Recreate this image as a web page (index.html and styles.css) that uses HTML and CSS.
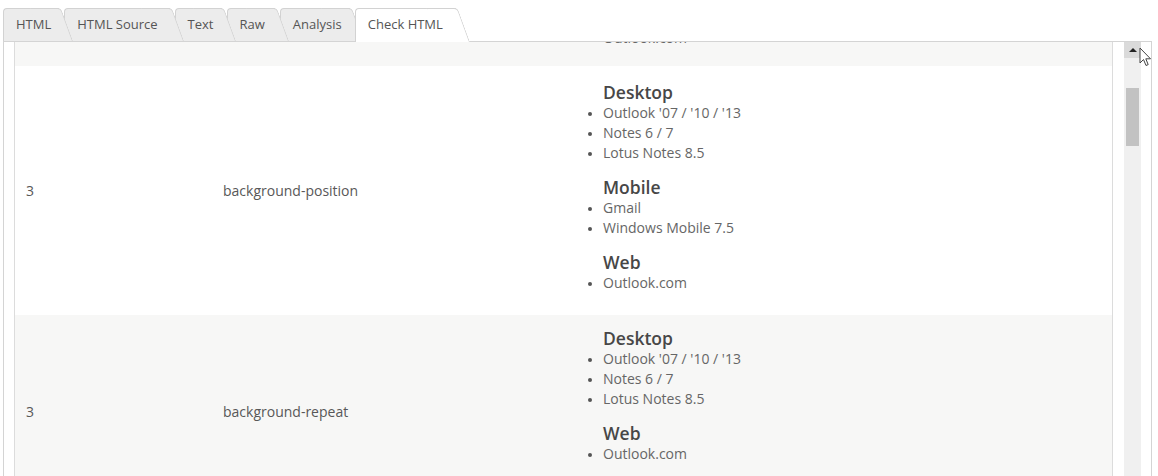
FILE: index.html
```html
<!DOCTYPE html>
<html lang="en">
<head>
    <meta charset="UTF-8">
    <meta name="viewport" content="width=device-width, initial-scale=1.0">
    <title>Check HTML</title>
    <link rel="stylesheet" href="styles.css">
</head>
<body>
    <nav class="tabs">
        <div class="tab t1">HTML</div>
        <div class="tab t2">HTML Source</div>
        <div class="tab t3">Text</div>
        <div class="tab t4">Raw</div>
        <div class="tab t5">Analysis</div>
        <div class="tab active">Check HTML</div>
    </nav>

    <section class="panel">
        <div class="results">
            <!-- tail of the row above, scrolled off -->
            <div class="row grey cut">
                <div class="cell"></div>
                <div class="cell"></div>
                <div class="cell clients">
                    <h4>Web</h4>
                    <ul>
                        <li>Outlook.com</li>
                    </ul>
                </div>
            </div>

            <div class="row">
                <div class="cell num">3</div>
                <div class="cell prop">background-position</div>
                <div class="cell clients">
                    <h4>Desktop</h4>
                    <ul>
                        <li>Outlook '07 / '10 / '13</li>
                        <li>Notes 6 / 7</li>
                        <li>Lotus Notes 8.5</li>
                    </ul>
                    <h4>Mobile</h4>
                    <ul>
                        <li>Gmail</li>
                        <li>Windows Mobile 7.5</li>
                    </ul>
                    <h4>Web</h4>
                    <ul>
                        <li>Outlook.com</li>
                    </ul>
                </div>
            </div>

            <div class="row grey tall">
                <div class="cell num">3</div>
                <div class="cell prop">background-repeat</div>
                <div class="cell clients">
                    <h4>Desktop</h4>
                    <ul>
                        <li>Outlook '07 / '10 / '13</li>
                        <li>Notes 6 / 7</li>
                        <li>Lotus Notes 8.5</li>
                    </ul>
                    <h4>Web</h4>
                    <ul>
                        <li>Outlook.com</li>
                    </ul>
                </div>
            </div>
        </div>

        <div class="scrollbar">
            <div class="sb-up"></div>
            <div class="sb-thumb"></div>
        </div>
    </section>

    <svg class="cursor" width="13" height="21" viewBox="0 0 13 21">
        <path d="M1 1 L1 16 L4.5 12.5 L7 18.5 L9.2 17.6 L6.8 11.8 L11.5 11.8 Z" fill="#fff" stroke="#444" stroke-width="1" stroke-linejoin="round"/>
    </svg>
</body>
</html>
```

FILE: styles.css
```css
body {
    margin: 0;
    font-family: "Open Sans", "Noto Sans", sans-serif;
    background-color: #fff;
    color: #555;
}
.tabs {
    display: flex;
    align-items: flex-end;
    padding: 8px 0 0 3px;
    height: 33px;
    position: relative;
    z-index: 2;
}
.tab {
    position: relative;
    height: 33px;
    line-height: 33px;
    padding: 0 22px 0 13px;
    margin-right: -9px;
    font-size: 13px;
    color: #555;
    white-space: nowrap;
}
.tab::before,
.tab::after {
    content: "";
    position: absolute;
    top: 0;
    bottom: 0;
    background-color: #ececec;
    border: 1px solid #d2d2d2;
    z-index: -1;
}
.tab::before {
    left: 0;
    right: 14px;
    border-right: none;
    border-bottom: none;
    border-top-left-radius: 4px;
}
.tab::after {
    right: 0;
    width: 30px;
    border-left: none;
    border-bottom: none;
    border-top-right-radius: 4px;
    transform: skewX(20deg);
    transform-origin: bottom;
}
.t1 { z-index: 6; }
.t2 { z-index: 5; padding-right: 26px; }
.t3 { z-index: 4; }
.t4 { z-index: 3; padding-right: 24px; }
.t5 { z-index: 2; }
.tab.active {
    z-index: 7;
    height: 34px;
    margin-bottom: -1px;
    padding-right: 27px;
}
.tab.active::before,
.tab.active::after {
    background-color: #fff;
}
.panel {
    display: flex;
    margin-left: 3px;
    width: 1137px;
    height: 434px;
    padding-left: 10px;
    border: 1px solid #d4d4d4;
    border-bottom: none;
    position: relative;
    z-index: 1;
}
.results {
    width: 1097px;
    border-left: 1px solid #dcdcdc;
    border-right: 1px solid #dcdcdc;
    margin-right: 11px;
    overflow: hidden;
}
.row {
    display: grid;
    grid-template-columns: 197px 367px 1fr;
    align-items: center;
    font-size: 14px;
}
.row.grey {
    background-color: #f7f7f6;
}
.row.cut {
    grid-template-rows: 24px;
    overflow: hidden;
    align-items: stretch;
}
.row.cut .clients {
    display: flex;
    flex-direction: column;
    justify-content: flex-end;
    padding-top: 0;
    padding-bottom: 18px;
}
.cell {
    padding: 0 11px;
}
.num,
.prop {
    color: #585858;
}
.clients {
    padding-top: 15px;
    padding-bottom: 22px;
}
.row.tall .clients {
    padding-top: 12px;
    padding-bottom: 43px;
}
.clients h4 {
    margin: 13px 0 0 13px;
    font-size: 17.5px;
    line-height: 22px;
    font-weight: 600;
    color: #474747;
}
.clients h4:first-child {
    margin-top: 0;
}
.clients ul {
    margin: 0;
    padding-left: 13px;
    list-style: disc;
}
.clients li {
    font-size: 14px;
    line-height: 20px;
    color: #666;
}
.clients li::marker {
    color: #555;
    font-size: 11px;
}
.scrollbar {
    width: 17px;
    background-color: #f0f0f0;
    position: relative;
}
.sb-up {
    height: 16px;
    background-color: #dadada;
    position: relative;
}
.sb-up::after {
    content: "";
    position: absolute;
    left: 5px;
    top: 6px;
    border-left: 4px solid transparent;
    border-right: 4px solid transparent;
    border-bottom: 4px solid #222;
}
.sb-thumb {
    margin: 30px 2px 0 2px;
    height: 58px;
    background-color: #c2c2c2;
}
.cursor {
    position: absolute;
    left: 1139px;
    top: 47px;
    z-index: 10;
}
```
